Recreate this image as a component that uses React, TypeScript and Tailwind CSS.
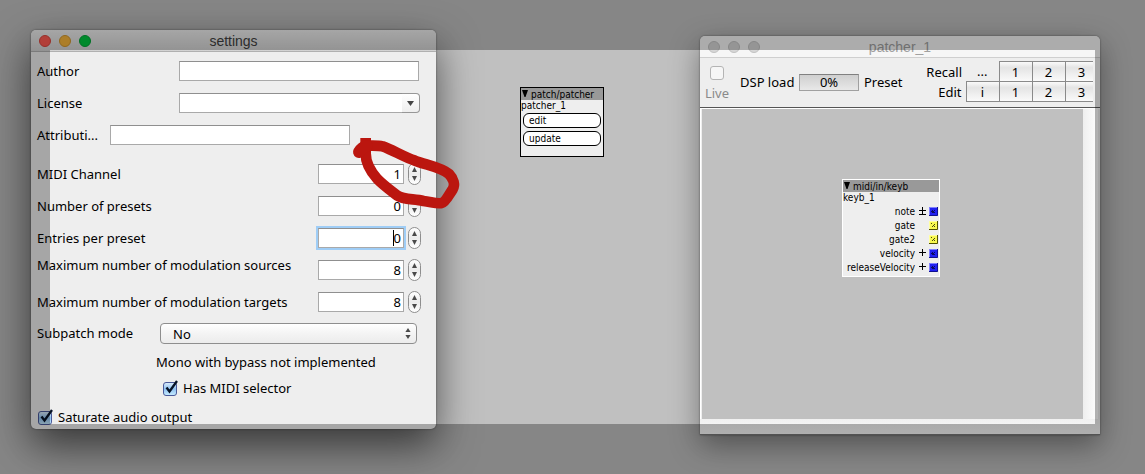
import type { ReactNode } from 'react';

const lights = {
  active: [
    'bg-[#ff5b52] border-[#d8453d]',
    'bg-[#f7b53c] border-[#d0952c]',
    'bg-[#00c63f] border-[#00a235]',
  ],
  inactive: [
    'bg-[#d6d6d6] border-[#c2c2c2]',
    'bg-[#d6d6d6] border-[#c2c2c2]',
    'bg-[#d6d6d6] border-[#c2c2c2]',
  ],
};

function TitleBar({ title, active }: { title: string; active: boolean }) {
  const tone = active
    ? 'bg-linear-to-b from-[#eeeeee] to-[#d2d2d2] border-[#b0b0b0] text-[#404040]'
    : 'bg-[#f6f6f6] border-[#cfcfcf] text-[#a0a0a0]';
  return (
    <header className={'grid h-[22px] grid-cols-[1fr_auto_1fr] items-center rounded-t-[5px] border-b ' + tone}>
      <div className="flex gap-2 pl-2">
        {lights[active ? 'active' : 'inactive'].map((c, i) => (
          <button
            key={i}
            aria-label={['Close', 'Minimize', 'Zoom'][i]}
            className={'size-3 rounded-full border ' + c}
          />
        ))}
      </div>
      <h1 className="font-['Liberation_Sans',sans-serif] text-[14px] leading-5">{title}</h1>
      <span />
    </header>
  );
}

const field =
  'h-5 border border-[#a9a9a9] border-t-[#8f8f8f] bg-white text-[13px] outline-none';

function Spinner({ name }: { name: string }) {
  return (
    <span className="flex h-[22px] w-[13px] shrink-0 flex-col items-center rounded-full border border-[#8e8e8e] bg-linear-to-b from-white via-[#ececec] to-white">
      <button type="button" aria-label={'Increase ' + name} className="flex flex-1 items-end justify-center pb-[2px]">
        <svg width="5" height="5" viewBox="0 0 5 5"><path d="M2.5 0L5 5H0Z" fill="#4a4a4a" /></svg>
      </button>
      <button type="button" aria-label={'Decrease ' + name} className="flex flex-1 items-start justify-center pt-[2px]">
        <svg width="5" height="5" viewBox="0 0 5 5"><path d="M2.5 5L5 0H0Z" fill="#4a4a4a" /></svg>
      </button>
    </span>
  );
}

const numbers = [
  { id: 'midi', label: 'MIDI Channel', value: '1' },
  { id: 'presets', label: 'Number of presets', value: '0' },
  { id: 'entries', label: 'Entries per preset', value: '0', focus: true },
  { id: 'sources', label: 'Maximum number of modulation sources', value: '8', raised: true },
  { id: 'targets', label: 'Maximum number of modulation targets', value: '8' },
];

function Tick({ label, className }: { label: string; className: string }) {
  return (
    <label className={'flex items-center gap-[6px] ' + className}>
      <span className="relative size-[14px]">
        <input
          type="checkbox"
          defaultChecked
          className="peer block size-[14px] appearance-none rounded-[3px] border border-[#4a5a9a] bg-linear-to-b from-[#d8ebfb] via-[#8fc1f0] to-[#c4eaff]"
        />
        <svg
          className="pointer-events-none absolute -top-[2px] left-0 hidden peer-checked:block"
          width="16"
          height="16"
          viewBox="0 0 16 16"
        >
          <path d="M3.5 7.5L6.5 11.5L14 1" fill="none" stroke="#061226" strokeWidth="2.3" />
        </svg>
      </span>
      {label}
    </label>
  );
}

function SettingsWindow() {
  return (
    <section className="absolute left-[31px] top-[30px] w-[405px] rounded-[5px] bg-[#eeeeee] shadow-[0_16px_40px_rgba(0,0,0,0.6),0_0_2px_rgba(0,0,0,0.5)]">
      <TitleBar title="settings" active />
      <form className="px-[6px] pt-[3px]">
        <div className="flex h-8 items-center">
          <label htmlFor="author" className="w-[142px] pt-[2px]">Author</label>
          <input id="author" className={field + ' w-60'} />
        </div>
        <div className="flex h-8 items-center">
          <label htmlFor="license" className="w-[142px] pt-[2px]">License</label>
          <span className="flex">
            <input id="license" className={field + ' w-[223px] border-r-0'} />
            <button
              type="button"
              aria-label="Show licenses"
              className="flex h-5 w-[18px] items-center justify-center rounded-r-[4px] border border-l-0 border-[#979797] bg-linear-to-b from-white to-[#eeeeee]"
            >
              <svg width="7" height="5" viewBox="0 0 7 5"><path d="M0 0H7L3.5 5Z" fill="#454545" /></svg>
            </button>
          </span>
        </div>
        <div className="flex h-8 items-center">
          <label htmlFor="attributions" className="w-[73px] pt-[2px]">Attributi...</label>
          <input id="attributions" className={field + ' w-60'} />
        </div>
        <div className="pt-[7px]">
          {numbers.map((n) => (
            <div key={n.id} className="flex h-8 items-center">
              <label htmlFor={n.id} className={'w-[281px] whitespace-nowrap ' + (n.raised ? 'pb-2' : 'pt-[2px]')}>
                {n.label}
              </label>
              <span className="relative mr-1 flex">
                <input
                  id={n.id}
                  defaultValue={n.value}
                  className={
                    field + ' w-[86px] pr-[2px] text-right ' + (n.focus ? 'ring-2 ring-[#9fcdf6]' : '')
                  }
                />
                {n.focus && <i className="absolute right-[10px] top-[2px] h-4 w-px bg-black" />}
              </span>
              <Spinner name={n.label} />
            </div>
          ))}
        </div>
        <div className="flex h-[31px] items-center">
          <label htmlFor="mode" className="w-[123px]">Subpatch mode</label>
          <span className="relative">
            <select
              id="mode"
              className="block h-[21px] w-[257px] appearance-none rounded-[4px] border border-[#8e8e8e] bg-linear-to-b from-white via-[#f4f4f4] to-[#ececec] pl-3 text-[13px] leading-4"
            >
              <option>No</option>
            </select>
            <svg className="pointer-events-none absolute right-[6px] top-[5px]" width="6" height="11" viewBox="0 0 6 11">
              <path d="M3 0L5.6 4H.4ZM3 11L.4 7H5.6Z" fill="#4a4a4a" />
            </svg>
          </span>
        </div>
        <p className="flex h-[27px] items-center pl-[119px]">Mono with bypass not implemented</p>
        <Tick label="Has MIDI selector" className="h-[25px] pl-[126px]" />
        <Tick label="Saturate audio output" className="mt-[5px] h-[23px] pl-[1px]" />
      </form>
    </section>
  );
}

const nodeText = "font-['DejaVu_Sans_Condensed','DejaVu_Sans',sans-serif] text-[10px] text-black";

function Node({ title, name, className, children }: { title: string; name: string; className: string; children: ReactNode }) {
  return (
    <article className={'absolute border bg-[#eeeeee] ' + nodeText + ' ' + className}>
      <h2 className="flex h-3 items-center gap-[3px] bg-[#999999] pl-px">
        <svg className="-translate-y-px" width="6" height="7" viewBox="0 0 6 7"><path d="M0 0H6L3.5 7H2.5Z" fill="#000" /></svg>
        {title}
      </h2>
      <p className="h-3 leading-3">{name}</p>
      {children}
    </article>
  );
}

const outlets = [
  { name: 'note', mark: '±', kind: 'blue' },
  { name: 'gate', mark: '', kind: 'yellow' },
  { name: 'gate2', mark: '', kind: 'yellow' },
  { name: 'velocity', mark: '+', kind: 'blue' },
  { name: 'releaseVelocity', mark: '+', kind: 'blue' },
];

function Mark({ kind }: { kind: string }) {
  return (
    <svg width="9" height="9" viewBox="0 0 9 9">
      {kind !== '' && <path d="M4.5 0V7M1 3.5H8" stroke="#000" fill="none" />}
      {kind === '±' && <path d="M1 7.5H8" stroke="#000" />}
    </svg>
  );
}

function Port({ kind }: { kind: string }) {
  const blue = kind === 'blue';
  return (
    <svg width="9" height="9" viewBox="0 0 9 9">
      <path d="M0 0H9V9H0Z" fill={blue ? '#8080ff' : '#ffffa0'} />
      <path d="M1 1H8V8H1Z" fill={blue ? '#2020f0' : '#f8f850'} />
      <path d="M8.5 0V8.5H0" fill="none" stroke={blue ? '#101090' : '#505000'} />
      {blue ? (
        <path d="M3 3h1v1h1v-1h1v1h-1v1h1v1h-3v-1h-1v-1h1z" fill="#0a0a60" />
      ) : (
        <path d="M2 2l1 1M3 6L6 3M4 4l2 2" stroke="#4a4a10" />
      )}
    </svg>
  );
}

const cell =
  'block h-full w-full bg-linear-to-b from-[#fafafa] via-[#e4e4e4] via-30% to-[#fafafa] text-center';

function PresetRow({ label, first, boxed }: { label: string; first: string; boxed: boolean }) {
  const border = 'h-5 border border-[#8a8a8a] p-0';
  return (
    <tr>
      <th scope="row" className="w-10 pr-1 text-right font-normal">{label}</th>
      <td className={boxed ? border : 'h-5 p-0'}>
        <button className={boxed ? cell : 'block w-full text-center'}>{first}</button>
      </td>
      {['1', '2', '3'].map((n) => (
        <td key={n} className={border}>
          <button className={cell}>{n}</button>
        </td>
      ))}
    </tr>
  );
}

function PatcherWindow() {
  return (
    <section className="absolute left-[700px] top-9 w-[400px] rounded-t-[5px] bg-[#eeeeee] shadow-[0_10px_30px_rgba(0,0,0,0.4),0_0_2px_rgba(0,0,0,0.5)]">
      <TitleBar title="patcher_1" active={false} />
      <div className="flex h-[50px] items-center border-b border-[#555555] pl-[4px] pr-[7px]">
        <label className="flex w-[26px] flex-col items-center gap-[3px] pt-[3px] text-[#8a8a8a]">
          <input type="checkbox" disabled className="size-[14px] appearance-none rounded-[3px] border border-[#b4b4b4] bg-[#f6f6f6]" />
          <span className="leading-5">Live</span>
        </label>
        <span className="ml-[10px] w-[59px] whitespace-nowrap">DSP load</span>
        <output className="flex h-[17px] w-[60px] items-center justify-center border border-[#a0a0a0] border-t-[#808080] bg-linear-to-b from-[#cfcfcf] to-[#e8e8e8]">
          0%
        </output>
        <span className="ml-[5px]">Preset</span>
        <div className="mb-[2px] ml-auto w-[171px] overflow-hidden">
          <table className="w-[176px] table-fixed border-collapse leading-4">
            <colgroup>
              <col className="w-[44px]" />
              <col className="w-[33px]" />
              <col className="w-[33px]" />
              <col className="w-[33px]" />
              <col className="w-[33px]" />
            </colgroup>
            <tbody>
              <PresetRow label="Recall" first="..." boxed={false} />
              <PresetRow label="Edit" first="i" boxed />
            </tbody>
          </table>
        </div>
      </div>
      <div className="flex border-l border-t border-white">
        <div className="relative ml-px h-[310px] flex-1 bg-[#c0c0c0]">
          <Node title="midi/in/keyb" name="keyb_1" className="left-[140px] top-[70px] w-[98px] border-white pb-[2px]">
            <ul>
              {outlets.map((o) => (
                <li key={o.name} className="flex h-[14px] items-center justify-end gap-[3px] pr-[1px]">
                  <span>{o.name}</span>
                  <span className="flex gap-[2px]">
                    <Mark kind={o.mark} />
                    <Port kind={o.kind} />
                  </span>
                </li>
              ))}
            </ul>
          </Node>
        </div>
        <div className="mr-[2px] w-[15px] bg-linear-to-r from-[#eeeeee] to-white" />
      </div>
      <div className="h-4 border-b border-[#777777] bg-linear-to-b from-[#f0f0f0] to-[#fcfcfc]" />
    </section>
  );
}

export default function App() {
  return (
    <main className="relative h-screen min-h-[474px] overflow-hidden bg-[#c0c0c0] font-['Noto_Sans',sans-serif] text-[13px] text-black">
      <Node title="patch/patcher" name="patcher_1" className="left-[520px] top-[87px] w-[84px] border-black pb-[10px]">
        <div className="flex flex-col gap-[3px] px-[2px] pt-px">
          <button className="h-[15px] rounded-[6px] border border-black bg-white pl-[5px] text-left leading-3">edit</button>
          <button className="h-[15px] rounded-[6px] border border-black bg-white pl-[5px] text-left leading-3">update</button>
        </div>
      </Node>
      <PatcherWindow />
      <SettingsWindow />
      <div className="pointer-events-none absolute inset-[50px] shadow-[0_0_0_2000px_rgba(0,0,0,0.3)]" />
      <svg className="pointer-events-none absolute left-[300px] top-[130px]" width="180" height="80" viewBox="0 0 540 240">
        <path
          d="M197 24V70C197 100 212 125 232 147C255 170 275 183 292 197C310 210 345 206 370 213C395 216 410 222 425 219C438 215 446 195 458 178C466 164 461 147 447 132C425 112 380 105 345 92C310 80 275 58 248 49C235 46 220 47 200 47"
          fill="none"
          stroke="#bb160f"
          strokeWidth="32"
          strokeLinejoin="round"
        />
        <path d="M177 66Q185 52 200 48" fill="none" stroke="#bb160f" strokeWidth="36" strokeLinecap="round" />
      </svg>
    </main>
  );
}
